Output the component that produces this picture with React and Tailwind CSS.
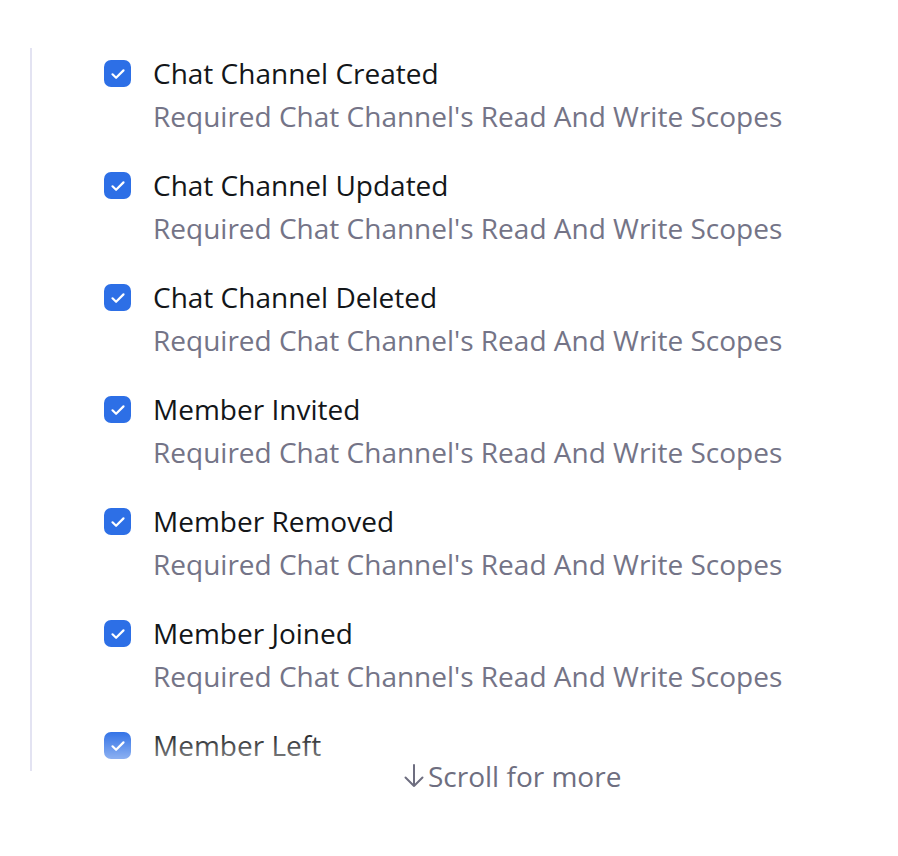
import React from 'react';

const events = [
  'Chat Channel Created',
  'Chat Channel Updated',
  'Chat Channel Deleted',
  'Member Invited',
  'Member Removed',
  'Member Joined',
  'Member Left',
];

const CheckIcon = () => (
  <span className="flex h-[27px] w-[27px] shrink-0 items-center justify-center rounded-[7px] bg-[#2d6fe6]">
    <svg width="18" height="18" viewBox="0 0 18 18" fill="none">
      <path d="M3.5 9.3l3.6 3.5L14.5 5.4" stroke="#fff" strokeWidth="2.2" strokeLinecap="round" strokeLinejoin="round" />
    </svg>
  </span>
);

export default function App() {
  return (
    <div className="min-h-screen bg-white pt-12 pl-[30px] font-['Open_Sans',sans-serif]">
      <div className="relative h-[723px] border-l-2 border-[#e3e3f2]">
        {/* List */}
        <div className="h-[717px] overflow-hidden pl-[72px] pt-[4px]">
          {events.map((name) => (
            <div key={name} className="mb-[26px]">
              <div className="flex items-center gap-[22px]">
                <CheckIcon />
                <span className="text-[28px] leading-[43px] text-[#131619]">{name}</span>
              </div>
              <div className="pl-[49px] text-[28px] leading-[43px] text-[#747487]">
                Required Chat Channel's Read And Write Scopes
              </div>
            </div>
          ))}
        </div>

        {/* Fade */}
        <div className="pointer-events-none absolute left-0 right-0 top-[682px] h-[35px] bg-gradient-to-b from-white/0 to-white/55" />

        {/* Scroll hint */}
        <div className="absolute left-[371px] top-[710px] flex items-center gap-[3px] text-[28px] leading-[36px] text-[#6e6e80]">
          <svg width="22" height="26" viewBox="0 0 22 26" fill="none">
            <path d="M11 2v21M2.5 14.5L11 23l8.5-8.5" stroke="#6e6e80" strokeWidth="2" strokeLinecap="round" strokeLinejoin="round" />
          </svg>
          <span>Scroll for more</span>
        </div>
      </div>
    </div>
  );
}
